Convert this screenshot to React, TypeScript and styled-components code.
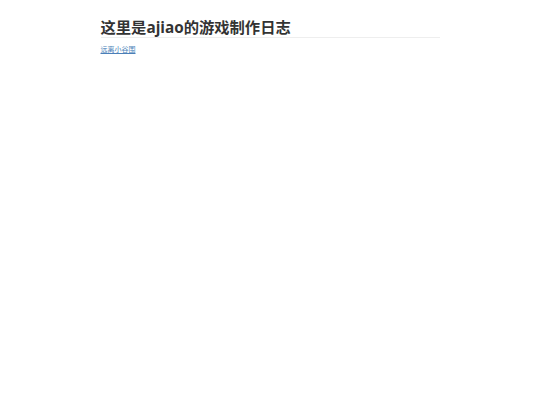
import { createGlobalStyle, styled } from "styled-components";

const GlobalStyle = createGlobalStyle`
  html, body {
    margin: 0;
    padding: 0;
    background: #fff;
  }
  body {
    font-family: "Open Sans", "Noto Sans CJK SC", sans-serif;
    color: #333;
  }
`;

const Page = styled.div`
  width: 339px;
  margin: 0 auto;
  padding-top: 18px;
`;

const Header = styled.header`
  border-bottom: 1px solid #eee;
  padding-bottom: 1px;
`;

const Title = styled.h1`
  margin: 0;
  font-size: 15.3px;
  line-height: 18px;
  font-weight: 700;
  color: #333;
`;

const Nav = styled.nav`
  padding-top: 7px;
  font-size: 7px;
  line-height: 10px;
`;

const NavLink = styled.a`
  color: #4a7fb8;
  text-decoration: underline;
`;

export default function App() {
  return (
    <>
      <GlobalStyle />
      <Page>
        <Header>
          <Title>这里是ajiao的游戏制作日志</Title>
        </Header>
        <Nav>
          <NavLink href="#">远离小谷围</NavLink>
        </Nav>
      </Page>
    </>
  );
}
